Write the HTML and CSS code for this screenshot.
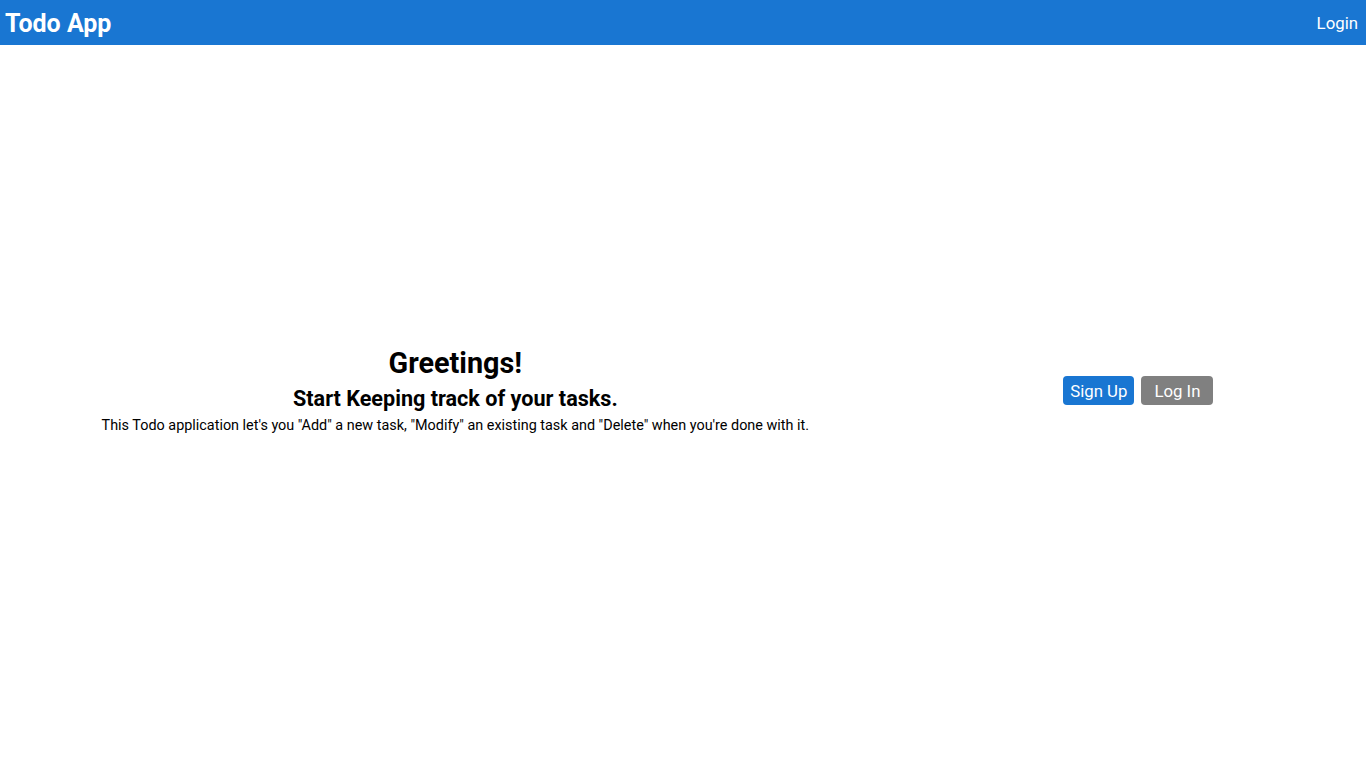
FILE: index.html
```html
<!DOCTYPE html>
<html lang="en">
<head>
<meta charset="utf-8">
<title>Todo App</title>
<link rel="stylesheet" href="styles.css">
</head>
<body>
<header class="navbar">
  <span class="brand">Todo App</span>
  <a class="nav-link" href="#">Login</a>
</header>
<main class="hero">
  <section class="intro">
    <h1 class="title">Greetings!</h1>
    <h2 class="subtitle">Start Keeping track of your tasks.</h2>
    <p class="desc">This Todo application let's you "Add" a new task, "Modify" an existing task and "Delete" when you're done with it.</p>
  </section>
  <section class="actions">
    <button class="btn btn-primary">Sign Up</button>
    <button class="btn btn-secondary">Log In</button>
  </section>
</main>
</body>
</html>
```

FILE: styles.css
```css
* { box-sizing: border-box; }
html, body { margin: 0; padding: 0; }
body {
  font-family: Roboto, "Liberation Sans", sans-serif;
  color: #000;
  background: #fff;
}
.navbar {
  height: 45px;
  background: #1976d2;
  display: flex;
  align-items: center;
  justify-content: space-between;
  padding: 0 8px 0 5px;
  color: #fff;
}
.brand {
  font-size: 25px;
  font-weight: 700;
  margin-top: 2px;
}
.nav-link {
  color: #fff;
  text-decoration: none;
  font-size: 16.8px;
}
.hero {
  display: grid;
  grid-template-columns: 2fr 1fr;
  align-items: center;
  padding-top: 299px;
}
.intro {
  text-align: center;
}
.title {
  margin: 0;
  font-size: 28.8px;
  font-weight: 700;
  line-height: 38px;
}
.subtitle {
  margin: 2px 0 0;
  font-size: 21.6px;
  font-weight: 700;
  line-height: 30px;
}
.desc {
  margin: 1px 0 0;
  font-size: 14.4px;
  line-height: 22px;
}
.actions {
  display: flex;
  justify-content: center;
  gap: 7px;
}
.btn {
  font-family: inherit;
  font-size: 16.8px;
  color: #fff;
  border: none;
  border-radius: 4px;
  height: 29px;
  padding: 0 7px;
  cursor: pointer;
}
.btn-primary { background: #1976d2; }
.btn-secondary { background: #808080; padding: 0 13px; }
```
